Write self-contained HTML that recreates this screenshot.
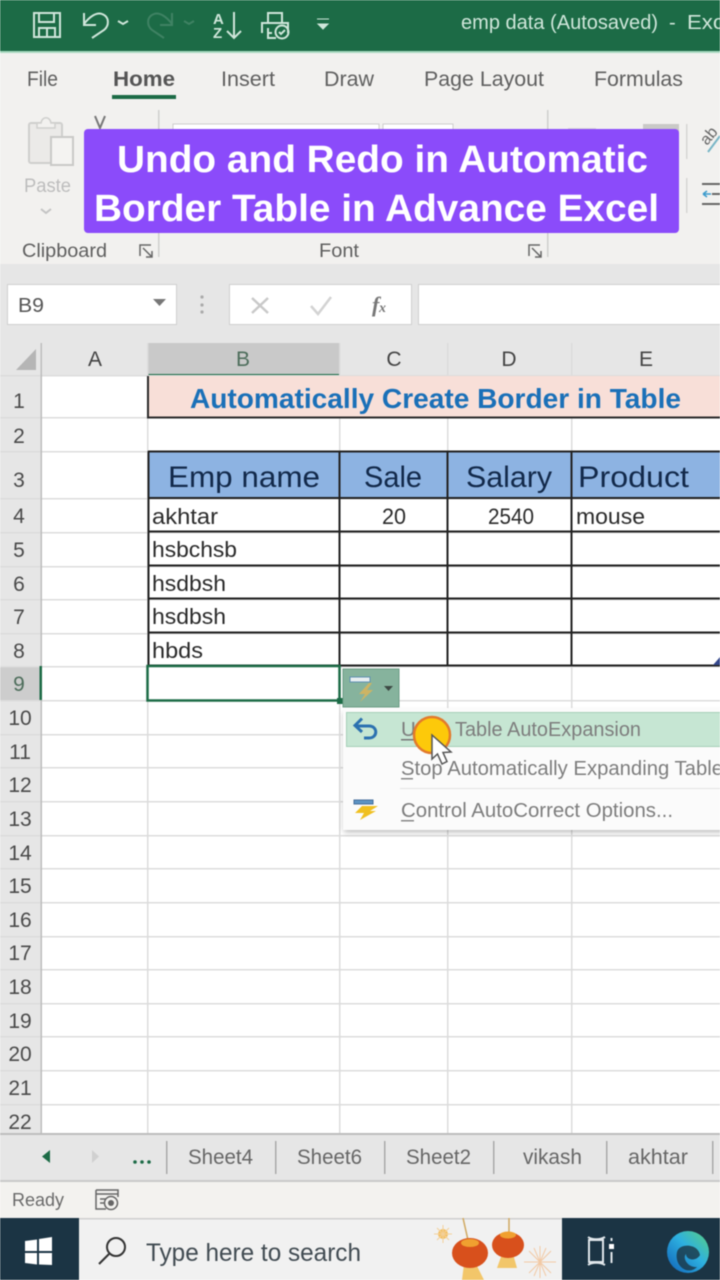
<!DOCTYPE html>
<html><head><meta charset="utf-8"><style>
html,body{margin:0;padding:0;background:#fff;width:720px;height:1280px;overflow:hidden}
svg{display:block;font-family:"Liberation Sans",sans-serif;filter:blur(.45px)}
.rh{font-size:21px;fill:#4a4a4a;text-anchor:middle}
.hdr{font-size:21px;fill:#444;text-anchor:middle}
.tab{font-size:21px;fill:#666}
.rib{font-size:21px;fill:#5f5f5f}
.th{font-size:30px;fill:#12294a}
.td{font-size:22px;fill:#2a2a2a}
.m{font-size:20.5px;fill:#7d7d7d}
.i{fill:none;stroke:#cfe6da;stroke-width:2}
</style></head><body>
<svg width="720" height="1280" viewBox="0 0 720 1280" xmlns="http://www.w3.org/2000/svg">
<defs>
<linearGradient id="e" x1="0" y1="1" x2="1" y2="0"><stop offset="0" stop-color="#0f60b8"/><stop offset=".55" stop-color="#2db0e0"/><stop offset="1" stop-color="#5bd080"/></linearGradient>
<filter id="s" x="-5%" y="-20%" width="110%" height="140%"><feGaussianBlur stdDeviation="3"/></filter>
</defs>
<rect width="720" height="1280" fill="#fff"/>
<!-- title bar -->
<rect width="720" height="52" fill="#1c6b46"/>
<rect y="51" width="720" height="2" fill="#a8d9c0"/>
<path class="i" d="M34 13H60V37H34ZM39 13V22H54V13M39 37V28H55V37M47 28V37"/>
<path class="i" d="M84 13V25H96M84 24C90 16 97 12 102 14C110 17 109 26 104 30L92 38"/>
<path d="M118 21l5 3 5-3" fill="none" stroke="#cfe6da" stroke-width="2"/>
<path fill="none" stroke="#3f8263" stroke-width="2" d="M172 13V25H160M172 24C166 16 159 12 154 14C146 17 147 26 152 30L164 38"/>
<path d="M184 21l5 3 5-3" fill="none" stroke="#3f8263" stroke-width="2"/>
<text x="213" y="24" font-size="15" font-weight="bold" fill="#cfe6da">A</text>
<text x="213" y="38" font-size="15" font-weight="bold" fill="#cfe6da">Z</text>
<path class="i" d="M234 12V37M227 31l7 7 7-7"/>
<path class="i" d="M268 23V13H282V23M262 33V23H288V33M268 33H272M268 28V38H276"/>
<circle cx="282" cy="32" r="6.500" class="i"/>
<path class="i" d="M279 32l2 2 4-4"/>
<path d="M317 19h12M318 24h10l-5 5z" fill="#cfe6da" stroke="#cfe6da" stroke-width="1"/>
<text x="461" y="29" font-size="20" fill="#cfe6da" textLength="197" lengthAdjust="spacingAndGlyphs">emp data (Autosaved)</text>
<text x="669" y="29" font-size="20" fill="#cfe6da">-</text>
<text x="687" y="29" font-size="20" fill="#cfe6da" textLength="37" lengthAdjust="spacingAndGlyphs">Exc</text>
<!-- ribbon -->
<rect y="53" width="720" height="211" fill="#f2f1ef"/>
<text class="rib" x="27" y="86" textLength="31" lengthAdjust="spacingAndGlyphs">File</text>
<text class="rib" x="113" y="86" font-weight="bold" style="fill:#555" textLength="62" lengthAdjust="spacingAndGlyphs">Home</text>
<rect x="112" y="95" width="64" height="4" fill="#1c6b46"/>
<text class="rib" x="221" y="86" textLength="54" lengthAdjust="spacingAndGlyphs">Insert</text>
<text class="rib" x="324" y="86" textLength="50" lengthAdjust="spacingAndGlyphs">Draw</text>
<text class="rib" x="424" y="86" textLength="120" lengthAdjust="spacingAndGlyphs">Page Layout</text>
<text class="rib" x="594" y="86" textLength="89" lengthAdjust="spacingAndGlyphs">Formulas</text>
<rect x="29" y="123" width="33" height="40" rx="2" fill="#ebeae8" stroke="#cfcfcd" stroke-width="2"/>
<path d="M37 128V123H41C42 116 50 116 51 123H55V128Z" fill="#f2f1ef" stroke="#cfcfcd" stroke-width="1.500"/>
<rect x="51" y="137" width="22" height="28" fill="#f4f3f1" stroke="#c9c9c7" stroke-width="2"/>
<path d="M95 116l5 12 5-12" fill="none" stroke="#777" stroke-width="2"/>
<text x="24" y="192" font-size="19" fill="#bdbdbd" textLength="47" lengthAdjust="spacingAndGlyphs">Paste</text>
<path d="M41 209l5 4 5-4" fill="none" stroke="#c4c4c4" stroke-width="2"/>
<rect x="158" y="110" width="1.500" height="147" fill="#cfcfcd"/>
<rect x="173" y="124" width="206" height="12" fill="#fff" stroke="#cdcdcd"/>
<rect x="383" y="124" width="70" height="12" fill="#fff" stroke="#cdcdcd"/>
<rect x="547" y="110" width="1.500" height="147" fill="#cfcfcd"/>
<rect x="568" y="128" width="28" height="8" fill="#d9d9d7"/>
<rect x="643" y="124" width="36" height="12" fill="#c9c9c7"/>
<rect x="686" y="124" width="1.500" height="35" fill="#d6d6d4"/>
<rect x="686" y="178" width="1.500" height="35" fill="#d6d6d4"/>
<text x="0" y="0" transform="translate(707 146) rotate(-50)" font-size="16" fill="#666">ab</text>
<path d="M708 152L720 136" stroke="#78b5c6" stroke-width="2"/>
<path d="M702 184H720M702 204H720M712 194H720" stroke="#666" stroke-width="2"/>
<path d="M703 194h8M703 194l4-3M703 194l4 3" stroke="#3d9ccd" stroke-width="1.500" fill="none"/>
<text class="rib" x="22" y="257" style="font-size:19.500px" textLength="85" lengthAdjust="spacingAndGlyphs">Clipboard</text>
<path d="M140 256V245H151M143 248L152 257M152 251V257H146" fill="none" stroke="#666" stroke-width="1.500"/>
<text class="rib" x="319" y="257" style="font-size:19.500px" textLength="40" lengthAdjust="spacingAndGlyphs">Font</text>
<path d="M529 256V245H540M532 248L541 257M541 251V257H535" fill="none" stroke="#666" stroke-width="1.500"/>
<rect y="264" width="720" height="79" fill="#e6e6e6"/>
<!-- formula bar -->
<rect x="7.500" y="284.500" width="169" height="40" fill="#fff" stroke="#cfcfcf"/>
<text x="18" y="312" font-size="20" fill="#555" textLength="26" lengthAdjust="spacingAndGlyphs">B9</text>
<path d="M153 299h13l-6.500 7z" fill="#777"/>
<circle cx="202" cy="297" r="1.600" fill="#aaa"/><circle cx="202" cy="305" r="1.600" fill="#aaa"/><circle cx="202" cy="312" r="1.600" fill="#aaa"/>
<rect x="229.500" y="284.500" width="182" height="40" fill="#fff" stroke="#cfcfcf"/>
<path d="M252 298l16 15M268 298l-16 15" stroke="#c9c9c9" stroke-width="2.500"/>
<path d="M311 306l7 8 13-17" fill="none" stroke="#d3d3d3" stroke-width="2.500"/>
<text x="372" y="312" font-size="22" font-weight="bold" font-style="italic" font-family="Liberation Serif" fill="#777">f</text><text x="379" y="312" font-size="14" font-weight="bold" font-style="italic" font-family="Liberation Serif" fill="#777">x</text>
<rect x="418.500" y="284.500" width="310" height="40" fill="#fff" stroke="#cfcfcf"/>
<!-- headers -->
<rect y="343" width="720" height="33" fill="#e6e6e6"/>
<rect y="376" width="41" height="758" fill="#e6e6e6"/>
<rect x="148" y="343" width="191" height="33" fill="#c9c9c9"/>
<rect x="148" y="374" width="191" height="2" fill="#1c6b46"/>
<path d="M16 370H36V349Z" fill="#b5b5b5"/>
<rect y="666" width="40" height="34" fill="#cdcdcd"/>
<g fill="#dcdcdc">
<rect x="147" y="343" width="1.500" height="791"/>
<rect x="339" y="343" width="1.500" height="791"/>
<rect x="447" y="343" width="1.500" height="791"/>
<rect x="571" y="343" width="1.500" height="791"/>
<rect x="0" y="375" width="720" height="1.500"/>
<rect x="0" y="417" width="720" height="1.500"/>
<rect x="0" y="451" width="720" height="1.500"/>
<rect x="0" y="498" width="720" height="1.500"/>
<rect x="0" y="532" width="720" height="1.500"/>
<rect x="0" y="566" width="720" height="1.500"/>
<rect x="0" y="599" width="720" height="1.500"/>
<rect x="0" y="633" width="720" height="1.500"/>
<rect x="0" y="666" width="720" height="1.500"/>
<rect x="0" y="700" width="720" height="1.500"/>
<rect x="0" y="734" width="720" height="1.500"/>
<rect x="0" y="767" width="720" height="1.500"/>
<rect x="0" y="801" width="720" height="1.500"/>
<rect x="0" y="835" width="720" height="1.500"/>
<rect x="0" y="868" width="720" height="1.500"/>
<rect x="0" y="902" width="720" height="1.500"/>
<rect x="0" y="936" width="720" height="1.500"/>
<rect x="0" y="969" width="720" height="1.500"/>
<rect x="0" y="1003" width="720" height="1.500"/>
<rect x="0" y="1036" width="720" height="1.500"/>
<rect x="0" y="1070" width="720" height="1.500"/>
<rect x="0" y="1104" width="720" height="1.500"/>
</g>
<rect x="40.500" y="343" width="1.500" height="791" fill="#bdbdbd"/>
<rect x="39.500" y="666" width="2.500" height="34" fill="#1c6b46"/>
<text class="hdr" x="95" y="366">A</text>
<text class="hdr" x="243" y="366" style="fill:#4d6d5b">B</text>
<text class="hdr" x="394" y="366">C</text>
<text class="hdr" x="509" y="366">D</text>
<text class="hdr" x="646" y="366">E</text>
<g>
<text class="rh" x="19" y="408">1</text>
<text class="rh" x="19" y="443">2</text>
<text class="rh" x="19" y="487">3</text>
<text class="rh" x="19" y="523">4</text>
<text class="rh" x="19" y="557">5</text>
<text class="rh" x="19" y="591">6</text>
<text class="rh" x="19" y="624">7</text>
<text class="rh" x="19" y="658">8</text>
<text class="rh" x="19" y="691" style="fill:#4d6d5b">9</text>
<text class="rh" x="20" y="725">10</text>
<text class="rh" x="20" y="759">11</text>
<text class="rh" x="20" y="792">12</text>
<text class="rh" x="20" y="826">13</text>
<text class="rh" x="20" y="860">14</text>
<text class="rh" x="20" y="893">15</text>
<text class="rh" x="20" y="927">16</text>
<text class="rh" x="20" y="960">17</text>
<text class="rh" x="20" y="994">18</text>
<text class="rh" x="20" y="1028">19</text>
<text class="rh" x="20" y="1061">20</text>
<text class="rh" x="20" y="1095">21</text>
<text class="rh" x="20" y="1129">22</text>
</g>
<!-- title row -->
<rect x="148" y="376" width="572" height="41" fill="#f8dfd8"/>
<path d="M148 376V417.500H720" fill="none" stroke="#2a2a2a" stroke-width="2"/>
<text x="190" y="408" font-size="28" font-weight="bold" fill="#1a70b8" textLength="491" lengthAdjust="spacingAndGlyphs">Automatically Create Border in Table</text>
<!-- table -->
<rect x="148" y="451" width="572" height="47" fill="#8db3e2"/>
<g stroke="#222" stroke-width="2" fill="none">
<path d="M148 451.500H720M148 498H720M148 531.500H720M148 565.500H720M148 598.500H720M148 632.500H720M148 665.500H720"/>
<path d="M148.500 451V666M339.500 451V666M447.500 451V666M571.500 451V666"/>
</g>
<text class="th" x="168" y="487" textLength="152" lengthAdjust="spacingAndGlyphs">Emp name</text>
<text class="th" x="364" y="487" textLength="58" lengthAdjust="spacingAndGlyphs">Sale</text>
<text class="th" x="466" y="487" textLength="86" lengthAdjust="spacingAndGlyphs">Salary</text>
<text class="th" x="578" y="487" textLength="111" lengthAdjust="spacingAndGlyphs">Product</text>
<text class="td" x="152" y="524" textLength="66" lengthAdjust="spacingAndGlyphs">akhtar</text>
<text class="td" x="382" y="524" textLength="24" lengthAdjust="spacingAndGlyphs">20</text>
<text class="td" x="488" y="524" textLength="46" lengthAdjust="spacingAndGlyphs">2540</text>
<text class="td" x="576" y="524" textLength="69" lengthAdjust="spacingAndGlyphs">mouse</text>
<text class="td" x="152" y="557" textLength="85" lengthAdjust="spacingAndGlyphs">hsbchsb</text>
<text class="td" x="152" y="591" textLength="74" lengthAdjust="spacingAndGlyphs">hsdbsh</text>
<text class="td" x="152" y="624" textLength="74" lengthAdjust="spacingAndGlyphs">hsdbsh</text>
<text class="td" x="152" y="658" textLength="51" lengthAdjust="spacingAndGlyphs">hbds</text>
<path d="M713 665L720 657V665Z" fill="#34478c"/>
<!-- selection -->
<rect x="147.500" y="666" width="192" height="34.500" fill="#fff" stroke="#1c6b46" stroke-width="2.500"/>
<rect x="337" y="698" width="6" height="6" fill="#1c6b46"/>
<!-- autocorrect btn -->
<rect x="343" y="669" width="56" height="38" fill="#86b39d" stroke="#6b9d85"/>
<rect x="350" y="677" width="20" height="5" fill="#e8eef0" stroke="#5e8fb0"/>
<path d="M369 683L359 694H365L360 702L373 690H367L372 683Z" fill="#d9b45a" opacity=".85"/>
<path d="M384 686h9l-4.500 5z" fill="#3d4a44"/>
<!-- dropdown menu -->
<rect x="344" y="712" width="385" height="120" fill="#000" opacity=".28" filter="url(#s)"/>
<rect x="343" y="708" width="385" height="122" fill="#fbfbfb"/>
<rect x="346.500" y="712.500" width="380" height="34" fill="#c6e6d3" stroke="#a5cfb7"/>
<path d="M362 718.500L355 725.500L362 732M355 726H369C378 726 378 738 369 738H364" fill="none" stroke="#2c71b0" stroke-width="3"/>
<text class="m" x="401" y="736">U</text>
<rect x="401" y="739" width="14" height="1.500" fill="#777"/>
<text class="m" x="455" y="736" textLength="186" lengthAdjust="spacingAndGlyphs">Table AutoExpansion</text>
<text class="m" x="401" y="775" textLength="322" lengthAdjust="spacingAndGlyphs">Stop Automatically Expanding Table</text>
<rect x="401" y="778" width="12" height="1.500" fill="#888"/>
<rect x="400" y="788" width="320" height="1" fill="#e3e3e3"/>
<text class="m" x="401" y="817" textLength="272" lengthAdjust="spacingAndGlyphs">Control AutoCorrect Options...</text>
<rect x="401" y="820" width="13" height="1.500" fill="#888"/>
<rect x="354" y="800" width="19" height="4" fill="#5c93c4" stroke="#466f9c" stroke-width="1"/>
<path d="M362 806H378L370 811H376L360 820L364 813H355Z" fill="#f0c020"/>
<!-- cursor highlight -->
<circle cx="432" cy="735" r="18" fill="#fdc90a" stroke="#e27a2c" stroke-width="2.500"/>
<path d="M432 735V759L437.500 754L442 764L447 761.500L443 752.500L451 752Z" fill="#fff" stroke="#555" stroke-width="1.500"/>
<!-- sheet tabs -->
<rect y="1134" width="720" height="46" fill="#e6e6e6"/>
<rect y="1133" width="720" height="2" fill="#bdbdbd"/>
<rect y="1180" width="720" height="2" fill="#c9c9c9"/>
<path d="M50 1150V1163L42 1156.500Z" fill="#1c6b46"/>
<path d="M92 1150V1163L99 1156.500Z" fill="#d0d0d0"/>
<circle cx="135" cy="1162" r="1.800" fill="#1c6b46"/><circle cx="142" cy="1162" r="1.800" fill="#1c6b46"/><circle cx="149" cy="1162" r="1.800" fill="#1c6b46"/>
<g fill="#a9a9a9">
<rect x="166" y="1141" width="1.500" height="33"/><rect x="275" y="1141" width="1.500" height="33"/><rect x="384" y="1141" width="1.500" height="33"/><rect x="493" y="1141" width="1.500" height="33"/><rect x="606" y="1141" width="1.500" height="33"/><rect x="712" y="1141" width="1.500" height="33"/>
</g>
<text class="tab" x="188" y="1164" textLength="65" lengthAdjust="spacingAndGlyphs">Sheet4</text>
<text class="tab" x="297" y="1164" textLength="65" lengthAdjust="spacingAndGlyphs">Sheet6</text>
<text class="tab" x="406" y="1164" textLength="65" lengthAdjust="spacingAndGlyphs">Sheet2</text>
<text class="tab" x="523" y="1164" textLength="59" lengthAdjust="spacingAndGlyphs">vikash</text>
<text class="tab" x="628" y="1164" textLength="60" lengthAdjust="spacingAndGlyphs">akhtar</text>
<!-- status -->
<rect y="1182" width="720" height="36" fill="#f3f2ef"/>
<text x="12" y="1206" font-size="18.500" fill="#6a6a6a" textLength="52" lengthAdjust="spacingAndGlyphs">Ready</text>
<path d="M96 1190H118V1197M96 1190V1209H106M96 1194H118M100 1199H106M100 1203H105" fill="none" stroke="#666" stroke-width="1.500"/>
<circle cx="111" cy="1203" r="6.500" fill="none" stroke="#666" stroke-width="1.500"/><circle cx="111" cy="1203" r="3" fill="#666"/>
<!-- taskbar -->
<rect y="1218" width="79" height="62" fill="#1b3444"/>
<rect x="79" y="1218" width="483" height="62" fill="#f1f1f1"/>
<rect x="79" y="1218" width="483" height="1.500" fill="#cfcfcf"/>
<rect x="562" y="1218" width="158" height="62" fill="#1b3444"/>
<path d="M25 1241L37 1239.500V1251H25ZM39 1239L52 1237V1251H39ZM25 1253H37V1264.500L25 1263ZM39 1253H52V1265L39 1264.500Z" fill="#fff"/>
<circle cx="116" cy="1247" r="9" fill="none" stroke="#333" stroke-width="2"/>
<path d="M109 1254L99 1264" stroke="#333" stroke-width="2"/>
<text x="146" y="1261" font-size="25" fill="#414b52" textLength="215" lengthAdjust="spacingAndGlyphs">Type here to search</text>
<!-- lanterns -->
<path d="M463 1218L468 1240M509 1218V1232" stroke="#d0a860" stroke-width="1.500"/>
<path d="M464 1264L462 1280H484L476 1264Z" fill="#f2c66a"/>
<path d="M502 1254L497 1268H517L513 1254Z" fill="#f2c66a"/>
<ellipse cx="470" cy="1253" rx="18" ry="15" fill="#d8501c"/><ellipse cx="470" cy="1243" rx="9" ry="4" fill="#f0a030"/>
<ellipse cx="508" cy="1245" rx="16" ry="13" fill="#d8501c"/><ellipse cx="508" cy="1235" rx="8" ry="3.500" fill="#f0a030"/>
<circle cx="443" cy="1234" r="5" fill="#f3c165"/>
<path d="M443 1225V1243M434 1234H452M437 1228L449 1240M449 1228L437 1240" stroke="#f3d09a" stroke-width="1"/>
<path d="M540 1246V1278M524 1262H556M529 1251L551 1273M551 1251L529 1273M534 1248L546 1276M546 1248L534 1276" stroke="#f2c9a4" stroke-width="1"/>
<path d="M589 1240H603V1262H589ZM588 1237C592 1240 600 1240 605 1237M588 1265C592 1262 600 1262 605 1265" fill="none" stroke="#e0e6ea" stroke-width="2"/>
<rect x="609" y="1244" width="5" height="5" fill="#fff"/><path d="M611.500 1238v3M611.500 1252v11" stroke="#e0e6ea" stroke-width="2"/>
<circle cx="688" cy="1252" r="21" fill="url(#e)"/>
<path d="M677 1252C679 1243 698 1243 700 1255C696 1262 686 1260 686 1254C682 1258 688 1268 697 1267C688 1276 674 1266 677 1252Z" fill="#1b3444" opacity=".8"/>
<!-- banner -->
<rect x="84" y="129" width="595" height="104" rx="4" fill="#8b4bfa"/>
<text x="117" y="172" font-size="38" font-weight="bold" fill="#fff" textLength="531" lengthAdjust="spacingAndGlyphs">Undo and Redo in Automatic</text>
<text x="94" y="221" font-size="38" font-weight="bold" fill="#fff" textLength="565" lengthAdjust="spacingAndGlyphs">Border Table in Advance Excel</text>
</svg>
</body></html>
